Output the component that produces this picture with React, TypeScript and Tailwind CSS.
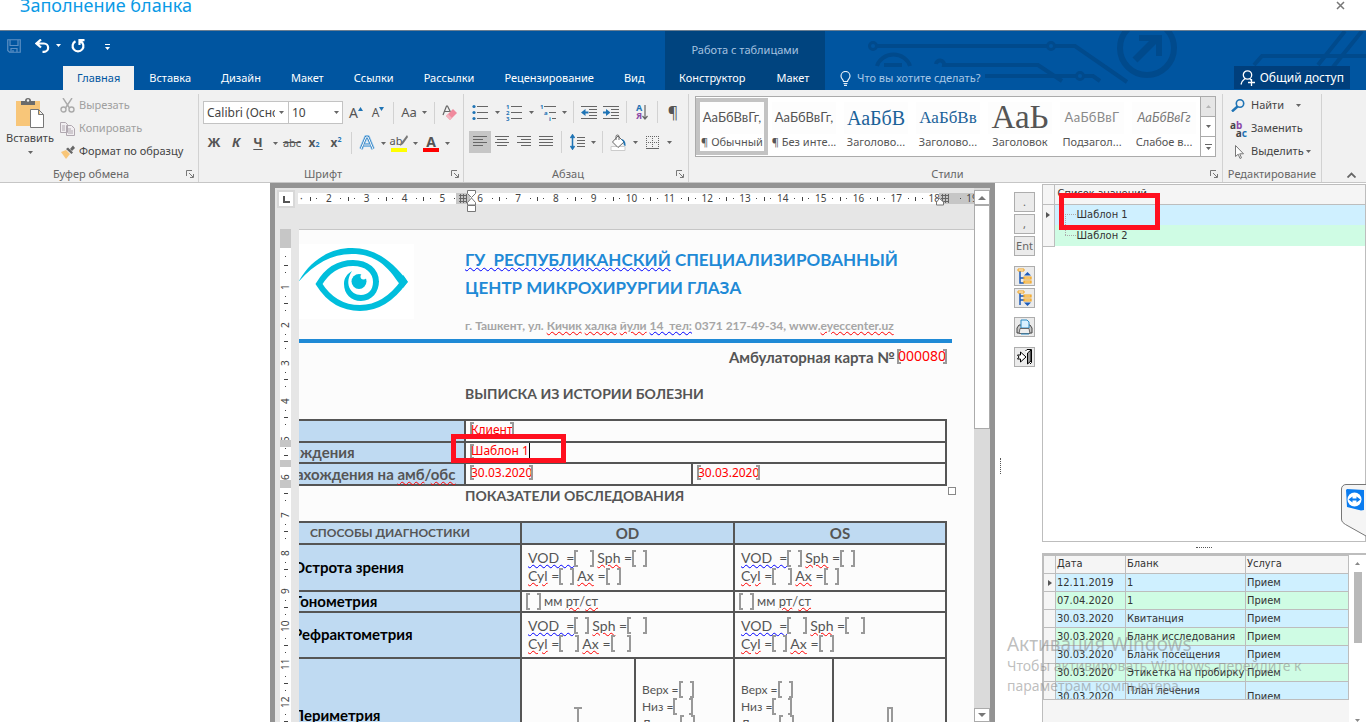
import React from "react";

type Kids = { children?: React.ReactNode };

const Chev = ({ className = "w-3" }: { className?: string }) => (
  <span className={`flex items-center justify-center ${className}`}>
    <svg width="5" height="3" viewBox="0 0 5 3"><path d="M0 0h5L2.500 3z" fill="#666" /></svg>
  </span>
);

const Sep = () => <span className="mx-1 h-[22px] w-px bg-[#d2d2d2]" />;

const Tool = ({ label, children, className = "" }: Kids & { label: string; className?: string }) => (
  <button aria-label={label} className={`flex h-[22px] w-[22px] shrink-0 items-center justify-center text-[#555] ${className}`}>
    {children}
  </button>
);

const Launcher = () => (
  <svg width="8" height="8" viewBox="0 0 8 8" fill="none" stroke="#777">
    <path d="M.5 6V.5H6M3 3l4 4M7.500 4v3.500H4" />
  </svg>
);

const Group = ({ title, children, className = "", launcher = true }: Kids & { title: string; className?: string; launcher?: boolean }) => (
  <section className={`relative flex shrink-0 flex-col border-r border-[#d2d2d2] ${className}`}>
    <div className="flex-1">{children}</div>
    <div className={`h-4 text-center text-[11px] leading-4 text-[#666] ${launcher ? "pr-4" : ""}`}>{title}</div>
    {launcher && <button aria-label={title} className="absolute right-1 bottom-1"><Launcher /></button>}
  </section>
);

const Lines = ({ w }: { w: [number, number][] }) => (
  <svg width="16" height="12" viewBox="0 0 16 12" stroke="#666">
    {w.map(([a, b], i) => <path key={i} d={`M${a} ${i * 3 + 0.5}H${b}`} />)}
  </svg>
);

const leftTabs = ["Вставка", "Дизайн", "Макет", "Ссылки", "Рассылки", "Рецензирование", "Вид"];

function Header() {
  return (
    <header className="flex border-t border-[#6b7f92] bg-[#0055a0] text-[11px] text-white">
      <div className="flex w-[665px] shrink-0 flex-col">
        <div className="flex h-[35px] items-center pb-1.5 pl-[7px]">
          <button aria-label="Сохранить">
            <svg width="14" height="14" viewBox="0 0 14 14" fill="none" stroke="#5c90c4" strokeWidth="1.200">
              <path d="M.75.75h12.500v12.500H2.500L.75 11.500zM3 1v5.500h8V1M4 13V9.500h6V13M6 11v2" />
            </svg>
          </button>
          <button aria-label="Отменить" className="ml-[14px] flex items-center gap-1.5">
            <svg width="15" height="14" viewBox="0 0 15 14" fill="none" stroke="#fff" strokeWidth="2.200">
              <path d="M6 .5 1.500 4.500 6 8.500M2 4.500h7a4 4 0 0 1 0 8.300H7.500" />
            </svg>
            <svg width="5" height="3" viewBox="0 0 5 3"><path d="M0 0h5L2.500 3z" fill="#fff" /></svg>
          </button>
          <button aria-label="Повторить" className="ml-2.5">
            <svg width="14" height="14" viewBox="0 0 14 14" fill="none" stroke="#fff" strokeWidth="2.200">
              <path d="M4.500 2.200A5.400 5.400 0 1 0 9.500 2.200M8.500 6V1.200H13.500" />
            </svg>
          </button>
          <button aria-label="Настройка панели" className="mt-1 ml-5">
            <svg width="5" height="7" viewBox="0 0 5 7" fill="#fff"><path d="M0 0h5v1H0zM0 3h5L2.500 6z" /></svg>
          </button>
        </div>
        <nav className="flex h-6 pl-[63px]">
          <button className="bg-[#f1f1f1] px-[14px] text-[#0055a0]">Главная</button>
          {leftTabs.map((t) => <button key={t} className="px-[15px]">{t}</button>)}
        </nav>
      </div>
      <div className="flex w-[160px] shrink-0 flex-col bg-[#00447f]">
        <div className="h-[35px] pt-1 text-center leading-[30px] text-[#a6c3e0]">Работа с таблицами</div>
        <nav className="flex h-6">
          <button className="px-[14px]">Конструктор</button>
          <button className="px-[17px]">Макет</button>
        </nav>
      </div>
      <div className="relative flex flex-1 items-end overflow-hidden">
        <svg className="absolute top-0 right-0" width="506" height="59" viewBox="860 31 506 59" fill="none" stroke="#004a8c" strokeWidth="4">
          <circle cx="873" cy="46" r="3.500" strokeWidth="3" />
          <path d="M877 46h170M1055 46h20l52 36" />
          <circle cx="1051" cy="46" r="3.500" strokeWidth="3" />
          <path d="M877 66a17 15 0 0 1 33 0M884 65h18" />
          <path d="M936 64a4 4 0 0 1 8 1h94l24 16M985 76h91M1084 76h9l7 5" />
          <circle cx="1080" cy="76" r="3.500" strokeWidth="3" />
          <circle cx="1147" cy="48" r="27" strokeWidth="6" />
          <path d="m1135 60 22-22" strokeWidth="7" />
          <path d="M1139 38h20v18" strokeWidth="6" />
          <path d="m1254 65 8-9h104M1318 65l27-34M1333 67l29-36" />
        </svg>
        <label className="relative flex h-6 flex-1 items-center gap-1.5 pl-[15px]">
          <svg width="11" height="15" viewBox="0 0 11 15" fill="none" stroke="#e5eef7" strokeWidth="1.200">
            <path d="M3.500 10.500c0-2-2.500-2.500-2.500-5.500a4.500 4.500 0 0 1 9 0c0 3-2.500 3.500-2.500 5.500zM3.500 12.500h4M4 14.300h3" />
          </svg>
          <input aria-label="Что вы хотите сделать?" placeholder="Что вы хотите сделать?" className="w-[160px] outline-none placeholder:text-[#a9c8e6]" />
        </label>
        <button className="relative mr-4 mb-px flex h-[23px] items-center gap-1 bg-[#003f7c] px-1.5 text-[12px]">
          <svg width="16" height="16" viewBox="0 0 16 16" fill="none" stroke="#fff" strokeWidth="1.300">
            <circle cx="7.500" cy="5" r="4.200" /><path d="M5 8.500C3 10 1.500 12 1 14.500M10 9l1 1M8 12.500h7M11.500 9v7" />
          </svg>
          Общий доступ
        </button>
      </div>
    </header>
  );
}

function Clipboard() {
  return (
    <Group title="Буфер обмена" className="w-[199px]">
      <div className="flex">
        <button className="flex w-[60px] flex-col items-center pt-1 text-[11px] leading-4 text-[#444]">
          <svg width="30" height="30" viewBox="0 0 30 30">
            <path fill="#f8c679" d="M1 3h24v25H1z" />
            <path fill="#6b6b6b" d="M6 3h4a3 3 0 0 1 6 0h4v4H6z" /><circle cx="13" cy="2.500" r="1.200" fill="#f1f1f1" />
            <path fill="#fff" stroke="#777" d="M15.500 11.500h8l5 5v13h-13zM23.500 11.500v5h5" />
          </svg>
          <span className="mt-0.5">Вставить</span>
          <Chev className="h-3 w-full" />
        </button>
        <div className="flex flex-col text-[11px] text-[#444]">
          <button className="flex h-[23px] items-center gap-1 text-[#a0a0a0]">
            <svg width="15" height="15" viewBox="0 0 15 15" fill="none" stroke="#aaa" strokeWidth="1.400">
              <path d="m3 0 6.500 10M12 0 5.500 10" /><circle cx="3.500" cy="11.500" r="2.500" /><circle cx="11.500" cy="11.500" r="2.500" />
            </svg>
            Вырезать
          </button>
          <button className="flex h-[23px] items-center gap-1 text-[#a0a0a0]">
            <svg width="15" height="14" viewBox="0 0 15 14" fill="#f1eef1" stroke="#b0a8b0">
              <path d="M.5.5h5l2 2v8h-7zM6.500 3.500h5l3 3v7h-8zM2 4h3M2 6h3M2 8h3M8 7h3M8 9h5M8 11h5" />
            </svg>
            Копировать
          </button>
          <button className="flex h-[23px] items-center gap-1">
            <svg width="15" height="14" viewBox="0 0 15 14">
              <path d="m1 7 5-2 4 4-4 5z" fill="#f8c679" /><path d="m6 4 2-1.500 5 5L11.500 9z" fill="#666" /><path d="m10 4 3-3.500L15 3l-3 3z" fill="#666" />
            </svg>
            Формат по образцу
          </button>
        </div>
      </div>
    </Group>
  );
}

function FontGroup() {
  return (
    <Group title="Шрифт" className="w-[265px]">
      <div className="flex items-center pt-[7px] pl-1">
        <button className="flex h-[23px] w-[86px] items-center border border-[#c3c3c3] bg-white pl-[3px] text-[12px] text-[#444]">
          <span className="w-[68px] overflow-hidden text-left whitespace-nowrap">Calibri (Осно</span><Chev className="flex-1" />
        </button>
        <button className="-ml-px flex h-[23px] w-[55px] items-center border border-[#c3c3c3] bg-white pl-[3px] text-[12px] text-[#444]">
          <span className="flex-1 text-left">10</span><Chev />
        </button>
        <Tool label="Увеличить размер" className="ml-0.5 text-[14px]">A<svg className="mb-2" width="5" height="4" viewBox="0 0 5 4"><path d="M0 4h5L2.500 0z" fill="#1f74b5" /></svg></Tool>
        <Tool label="Уменьшить размер" className="text-[12px]">A<svg className="mb-2" width="5" height="4" viewBox="0 0 5 4"><path d="M0 0h5L2.500 4z" fill="#1f74b5" /></svg></Tool>
        <Sep />
        <Tool label="Регистр" className="text-[13px]">Aa</Tool><Chev className="w-2" />
        <span className="w-0.5" /><Sep />
        <Tool label="Очистить формат">
          <svg width="16" height="16" viewBox="0 0 16 16">
            <path d="M1 10 4.500 1h1L9 8M2.500 6.500h5" fill="none" stroke="#666" strokeWidth="1.200" />
            <path d="m4 11 7-7 4 4-7 7z" fill="#f08a9d" /><path d="m4 11 2-2 4 4-2 2z" fill="#f5b3bf" />
          </svg>
        </Tool>
      </div>
      <div className="flex items-center pt-2 pl-1">
        <Tool label="Полужирный" className="text-[13px] font-bold">Ж</Tool>
        <Tool label="Курсив" className="text-[13px] font-bold italic">К</Tool>
        <Tool label="Подчеркнутый" className="text-[13px] font-bold underline underline-offset-2">Ч</Tool>
        <Chev />
        <Tool label="Зачеркнутый" className="text-[11px] line-through">abc</Tool>
        <Tool label="Подстрочный" className="text-[12px] font-bold">x<sub className="text-[7px] text-[#1f74b5]">2</sub></Tool>
        <Tool label="Надстрочный" className="text-[12px] font-bold">x<sup className="text-[7px] text-[#1f74b5]">2</sup></Tool>
        <Sep />
        <Tool label="Эффекты">
          <svg width="16" height="16" viewBox="0 0 16 16" fill="none" strokeLinejoin="round">
            <path d="M2 14 7 2h2l5 12M4.500 10h7" stroke="#9ecbee" strokeWidth="4" /><path d="M2 14 7 2h2l5 12M4.500 10h7" stroke="#2e7fc0" strokeWidth="2.400" /><path d="M2 14 7 2h2l5 12M4.500 10h7" stroke="#fff" strokeWidth="1" />
          </svg>
        </Tool>
        <Chev className="w-2.5" />
        <Tool label="Цвет выделения">
          <span className="flex flex-col items-center">
            <span className="flex h-[13px] items-center text-[11px]">ab
              <svg className="-ml-1" width="10" height="12" viewBox="0 0 10 12"><path d="M9 0 10 2 5 9l-3 2 1-3z" fill="#777" /></svg>
            </span>
            <span className="h-1 w-4 bg-[#ff0]" />
          </span>
        </Tool>
        <Chev className="w-2.5" />
        <Tool label="Цвет текста">
          <span className="flex flex-col items-center"><span className="h-[13px] text-[14px] leading-[13px] font-bold">A</span><span className="h-1 w-4 bg-[#f00]" /></span>
        </Tool>
        <Chev className="w-2.5" />
      </div>
    </Group>
  );
}

const List = ({ kind }: { kind: "dot" | "num" | "multi" }) => (
  <svg width="17" height="17" viewBox="0 0 17 17" fontFamily="Noto Sans" fontSize="6" fontWeight="bold" fill="#1f74b5">
    {kind === "dot" && [2, 8, 14].map((y) => <g key={y}><circle cx="2" cy={y + 0.5} r="1.600" /><path d={`M5 ${y + 0.5}h11`} stroke="#666" /></g>)}
    {kind === "num" && [2, 8, 14].map((y, i) => <g key={y}><text x="0" y={y + 3}>{i + 1}</text><path d={`M5 ${y + 0.5}h11`} stroke="#666" /></g>)}
    {kind === "multi" && (
      <g><text x="0" y="5">1</text><text x="4" y="11">a</text><text x="9" y="17">i</text><path d="M4 2.500h12M9 8.500h7M12 14.500h4" stroke="#666" /></g>
    )}
  </svg>
);

const Indent = ({ right }: { right?: boolean }) => (
  <svg width="16" height="13" viewBox="0 0 16 13">
    <path d="M0 .5h16M8 3.500h8M8 6.500h8M8 9.500h8M0 12.500h16" stroke="#666" />
    <path d={right ? "M0 5.500h3V3l4.500 3.500L3 10V7.500H0z" : "M7.500 5.500h-3V3L0 6.500 4.500 10V7.500h3z"} fill="#1f74b5" />
  </svg>
);

function Paragraph() {
  return (
    <Group title="Абзац" className="w-[225px]">
      <div className="flex items-center pt-[7px] pl-[5px]">
        <Tool label="Маркеры"><List kind="dot" /></Tool><Chev />
        <Tool label="Нумерация"><List kind="num" /></Tool><Chev />
        <Tool label="Многоуровневый список"><List kind="multi" /></Tool><Chev className="w-2.5" />
        <Sep />
        <Tool label="Уменьшить отступ"><Indent /></Tool>
        <Tool label="Увеличить отступ"><Indent right /></Tool>
        <Sep />
        <Tool label="Сортировка">
          <span className="flex flex-col text-[9px] leading-2 font-bold"><span className="text-[#1f74b5]">А</span><span className="text-[#8c4aa8]">Я</span></span>
          <svg width="6" height="15" viewBox="0 0 6 15" fill="none" stroke="#666" strokeWidth="1.200"><path d="M3 0v14M.5 11 3 14l2.500-3" /></svg>
        </Tool>
        <Sep />
        <Tool label="Непечатаемые знаки" className="text-[16px]">¶</Tool>
      </div>
      <div className="flex items-center pt-2 pl-[5px]">
        <Tool label="По левому краю" className="bg-[#c6c6c6]"><Lines w={[[1, 15], [1, 11], [1, 15], [1, 11]]} /></Tool>
        <Tool label="По центру"><Lines w={[[1, 15], [3, 13], [1, 15], [3, 13]]} /></Tool>
        <Tool label="По правому краю"><Lines w={[[1, 15], [5, 15], [1, 15], [5, 15]]} /></Tool>
        <Tool label="По ширине"><Lines w={[[1, 15], [1, 15], [1, 15], [1, 15]]} /></Tool>
        <Sep />
        <Tool label="Интервал">
          <svg width="15" height="16" viewBox="0 0 15 16" fill="none"><path d="M2.500 1v14M.5 4l2-3 2 3M.5 12l2 3 2-3" stroke="#1f74b5" strokeWidth="1.500" /><path d="M7 3.500h8M7 6.500h8M7 9.500h8M7 12.500h8" stroke="#666" /></svg>
        </Tool>
        <Chev className="w-2.5" /><Sep />
        <Tool label="Заливка">
          <svg width="17" height="17" viewBox="0 0 17 17"><path d="M1 12.500h14v4H1z" fill="#fff" stroke="#ccc" /><path d="m8 2 6 6-6 5.500L2.500 8z" fill="#fff" stroke="#666" /><path d="M6 6V2.500a1.500 1.500 0 0 1 3 0V6" fill="none" stroke="#666" /><path d="M11 5c3 0 5 3 4.500 7-2 0-2-3-2-4z" fill="#1f74b5" /></svg>
        </Tool>
        <Chev />
        <Tool label="Границы">
          <svg width="13" height="13" viewBox="0 0 13 13" fill="none" stroke="#666"><path strokeDasharray="1 1" d="M.5 0v12M6.500 0v12M12.500 0v12M0 .5h13M0 6.500h13" /><path d="M0 12.500h13" /></svg>
        </Tool>
        <Chev />
      </div>
    </Group>
  );
}

const styles = [
  { label: "¶ Обычный", text: "АаБбВвГг,", cls: "font-[Lato] text-[13px] text-[#555]" },
  { label: "¶ Без инте...", text: "АаБбВвГг,", cls: "font-[Lato] text-[13px] text-[#555]" },
  { label: "Заголово...", text: "АаБбВ", cls: "font-[Liberation_Serif] text-[20px] text-[#1b6299]" },
  { label: "Заголово...", text: "АаБбВв", cls: "font-[Liberation_Serif] text-[17px] text-[#1b6299]" },
  { label: "Заголовок", text: "АаЬ", cls: "font-[Liberation_Serif] text-[33px] text-[#555]" },
  { label: "Подзагол...", text: "АаБбВвГ", cls: "font-[Lato] text-[13px] tracking-wide text-[#8a8a8a]" },
  { label: "Слабое в...", text: "АаБбВвГг", cls: "font-[Lato] text-[13px] italic text-[#7a7a7a]" },
];

function Styles() {
  return (
    <Group title="Стили" className="w-[534px]">
      <div className="mt-0.5 ml-[6px] flex h-[61px] w-[521px] border border-[#ababab] bg-white">
        <div className="flex flex-1 overflow-hidden">
          {styles.map((s, i) => (
            <button key={i} className={`my-px flex w-[72px] shrink-0 flex-col items-center border-4 ${i === 0 ? "border-[#c3c3c3]" : "border-transparent"}`}>
              <span className={`flex h-8 w-full items-center justify-center overflow-hidden bg-[#fdfdfd] whitespace-nowrap ${s.cls}`}>{s.text}</span>
              <span className="text-[11px] leading-4 whitespace-nowrap text-[#555]">{s.label}</span>
            </button>
          ))}
        </div>
        <div className="flex w-[15px] flex-col border-l border-[#ababab]">
          <button aria-label="Вверх" className="flex flex-1 items-center justify-center bg-[#e6e6e6]"><svg width="5" height="3" viewBox="0 0 5 3"><path d="M0 3h5L2.500 0z" fill="#b5b5b5" /></svg></button>
          <button aria-label="Вниз" className="flex flex-1 items-center justify-center border-y border-[#ababab]"><Chev /></button>
          <button aria-label="Ещё" className="flex flex-1 items-center justify-center"><svg width="7" height="6" viewBox="0 0 7 6" fill="#666"><path d="M0 0h7v1H0zM1 3h5L3.500 6z" /></svg></button>
        </div>
      </div>
    </Group>
  );
}

function Editing() {
  return (
    <Group title="Редактирование" className="w-[99px]" launcher={false}>
      <div className="flex flex-col pl-2 text-[11px] text-[#444]">
        <button className="flex h-[23px] items-center">
          <svg className="mr-1.5" width="14" height="13" viewBox="0 0 14 13" fill="none" stroke="#1f74b5"><circle cx="9" cy="4.500" r="3.700" strokeWidth="1.600" /><path d="M6.500 7.500 1 12.500" strokeWidth="2.400" /></svg>
          Найти<Chev className="ml-2 w-3" />
        </button>
        <button className="flex h-[23px] items-center">
          <span className="mr-1 flex w-4 flex-col text-[10px] leading-[8px] font-bold"><span className="-ml-px text-left">a<span className="text-[#8c4aa8]">b</span></span><span className="text-right">a<span className="text-[#1f74b5]">c</span></span></span>
          Заменить
        </button>
        <button className="flex h-[23px] items-center">
          <svg className="mr-[7px] ml-1" width="9" height="14" viewBox="0 0 9 14" fill="#fff" stroke="#777"><path d="M.5.5v11l2.700-2.300L5 13.500l1.500-.7-1.800-4H8.500z" /></svg>
          Выделить<Chev className="w-2.5" />
        </button>
      </div>
    </Group>
  );
}

function TopRuler() {
  const nums = Array.from({ length: 18 }, (_, i) => i + 2);
  return (
    <div className="relative flex h-[41px] items-start overflow-hidden">
      <div className="mt-[2px] ml-[2px] flex h-[18px] w-[18px] items-center justify-center border-2 border-[#d8d8d8] bg-white">
        <svg width="7" height="7" viewBox="0 0 7 7"><path d="M1 0v6h6" fill="none" stroke="#555" strokeWidth="2" /></svg>
      </div>
      <div className="mt-[5px] ml-[3px] flex h-[11px] flex-1 overflow-hidden bg-white text-[10px] leading-[11px] text-[#444]">
        <span className="w-3 shrink-0 pl-0.5">·</span>
        <div className="flex w-[681px] shrink-0">
          {nums.map((n) => (
            <span key={n} className={`flex flex-1 items-center justify-between ${n === 19 ? "bg-[#c6c6c6]" : ""}`}>
              <i className="h-1 w-px bg-[#444]" /><i className="h-px w-px bg-[#444]" /><span className="w-3 text-center whitespace-nowrap">{n}</span><i className="h-px w-px bg-[#444]" /><i className="w-px" />
            </span>
          ))}
        </div>
      </div>
      <svg className="absolute top-0 left-[181px]" width="26" height="26" viewBox="0 0 26 26">
        <path fill="#c6c6c6" d="M0 5h14v11H0z" /><path d="M3 7.500h8M3 10.500h8M3 13.500h8M4.500 6v9M7.500 6v9M10.500 6v9" stroke="#666" />
        <path d="M11.500 2.500h8v3l-4 4-4-4zM11.500 17v-2.500l4-4.500 4 4.500V17zM11.500 17.500h8v6h-8z" fill="#fff" stroke="#777" />
      </svg>
      <svg className="absolute top-0 left-[658px]" width="24" height="20" viewBox="0 0 24 20">
        <path fill="#c6c6c6" d="M6 5h18v11H6z" /><path d="M8 7.500h8M8 10.500h8M8 13.500h8M9.500 6v9M12.500 6v9M15.500 6v9" stroke="#666" />
        <path d="M3.500 17v-3l3-3.500 4 3.500v3z" fill="#fff" stroke="#777" />
      </svg>
    </div>
  );
}

function SideRuler() {
  return (
    <div className="relative ml-[5px] flex w-[11px] shrink-0 flex-col overflow-hidden bg-white text-[10px] leading-[11px] text-[#444]">
      <div className="h-[19px] shrink-0 bg-[#c6c6c6]" />
      <div className="flex h-[17px] shrink-0 items-center justify-center"><i className="h-px w-px bg-[#444]" /></div>
      {Array.from({ length: 13 }, (_, i) => i + 1).map((n) => (
        <div key={n} className="flex h-[38px] shrink-0 flex-col items-center justify-between">
          <i className="h-px w-1 bg-[#444]" /><i className="h-px w-px bg-[#444]" /><span className="flex h-3 rotate-180 items-center [writing-mode:vertical-rl]">{n}</span><i className="h-px w-px bg-[#444]" /><i className="h-px" />
        </div>
      ))}
      <i className="absolute top-[211px] h-[7px] w-full bg-[#c6c6c6]" />
      <i className="absolute top-[231px] h-[7px] w-full bg-[#c6c6c6]" />
      <i className="absolute top-[251px] h-[8px] w-full bg-[#c6c6c6]" />
    </div>
  );
}

const L = ({ h = "h-[17px]" }: { h?: string }) => <i className={`inline-block w-1 shrink-0 border-y-2 border-l-2 border-[#999] align-middle ${h}`} />;
const R = ({ h = "h-[17px]" }: { h?: string }) => <i className={`inline-block w-1 shrink-0 border-y-2 border-r-2 border-[#999] align-middle ${h}`} />;
const Gap = ({ wide }: { wide?: boolean }) => <span className="mr-[3px] inline-flex items-center align-middle"><L /><span className={wide ? "w-3" : "w-[7px]"} /><R /></span>;
const Red = ({ children }: Kids) => <span className="underline decoration-[#f00] decoration-wavy decoration-1 underline-offset-1">{children}</span>;
const Blue = ({ children }: Kids) => <span className="whitespace-pre underline decoration-[#00f] decoration-wavy decoration-1 underline-offset-1">{children}</span>;
const Value = ({ children, className = "text-[12px]" }: Kids & { className?: string }) => (
  <span className="inline-flex items-center font-[Noto_Sans] text-[#f00]"><L h="h-[15px]" /><span className={`-mx-[3px] ${className}`}>{children}</span><R h="h-[15px]" /></span>
);

const Vod = ({ a, b, c, d }: { a?: boolean; b?: boolean; c?: boolean; d?: boolean }) => (
  <td colSpan={2} className="border-2 border-[#555] pl-1.5 text-[14px] leading-[18px]">
    <div className="flex h-[18px] items-center whitespace-pre"><Blue>VOD  =</Blue><Gap wide={a} /><Red>Sph</Red> =<Gap wide={b} /></div>
    <div className="flex h-[18px] items-center whitespace-pre"><Red>Cyl</Red> =<Gap wide={c} /><Red>Ax</Red> =<Gap wide={d} /></div>
  </td>
);

const Mm = () => (
  <td colSpan={2} className="border-2 border-[#555] pl-1">
    <div className="flex items-center text-[13px] leading-4 whitespace-pre"><Gap />мм <Red>рт</Red>/<Red>ст</Red></div>
  </td>
);

const Sides = () => (
  <td className="border-2 border-[#555] pt-[22px] pl-1.5 align-top text-[12px] leading-[17px]">
    {["Верх", "Низ", "Лево", "Право"].map((s) => <div key={s} className="flex h-[17px] items-center">{s} =<Gap wide={s === "Низ"} /></div>)}
  </td>
);

const rowHead = "border-2 border-[#555] bg-[#bfdaf2] pl-px text-left text-[15px] font-bold text-black";

function Page() {
  return (
    <div className="ml-2 min-w-0 flex-1 overflow-hidden border-t border-[#c6c6c6] bg-[#fcfcfc] font-[Lato,Noto_Sans,sans-serif] text-[#555]">
      <div className="flex h-[109px]">
        <div className="mt-[14px] h-[75px] w-[115px] shrink-0 bg-white">
          <svg width="115" height="75" viewBox="0 0 115 75" fill="none" stroke="#00bedc" strokeWidth="6">
            <path d="M-1 38.500C12 15 32 4 53 4c22 0 40 12 56 34-2 2-3 4-5 6l-5-6C86 18 72 10 53 10 32 10 15 20-1 38.500z" fill="#00bedc" stroke="none" />
            <path d="M102 33 105 37.500C92 56 78 64 61 64 44 64 30 56 20 40 29 25 41 19 54 19c14 0 23 8 23 19" />
            <path d="M80 37c0 11-7 20-18 20-10 0-17-7-17-17 0-6 3-10 8-13-8 12-2 24 9 24 7 0 12-5 12-13z" fill="#00bedc" stroke="none" />
            <circle cx="60" cy="37.500" r="7.500" fill="#00bedc" stroke="none" /><circle cx="64.500" cy="32.500" r="3" fill="#fff" stroke="none" />
          </svg>
        </div>
        <div className="ml-[51px] pt-4 font-bold whitespace-nowrap">
          <h1 className="text-[17px] leading-7 whitespace-pre text-[#1f8ad6]"><Blue>ГУ  РЕСПУБЛИКАНСКИЙ</Blue> СПЕЦИАЛИЗИРОВАННЫЙ</h1>
          <h1 className="text-[17px] leading-7 text-[#1f8ad6]">ЦЕНТР МИКРОХИРУРГИИ ГЛАЗА</h1>
          <p className="mt-4 text-[12px] leading-4 whitespace-pre text-[#a6a6a6]">г. Ташкент, ул. <Red>Кичик</Red> <Red>халка</Red> <Red>йули</Red> <Blue>14  тел:</Blue> 0371 217-49-34, www.<Red>eyeccenter.uz</Red></p>
        </div>
      </div>
      <div className="h-1 w-[653px] bg-[#1f8ad6]" />
      <div className="mt-[3px] flex w-[648px] items-center justify-end gap-0.5 text-[15px] leading-5 font-bold">
        Амбулаторная карта № <span className="font-normal"><Value className="text-[14px]">000080</Value></span>
      </div>
      <h2 className="mt-4 ml-[166px] text-[14px] leading-5 font-bold">ВЫПИСКА ИЗ ИСТОРИИ БОЛЕЗНИ</h2>
      <div className="relative mt-[15px] -ml-[9px] w-[657px]">
        <table className="w-full table-fixed border-collapse text-[15px]">
          <colgroup><col className="w-[174px]" /><col className="w-[227px]" /><col /></colgroup>
          <tbody>
            <tr className="h-[22px]"><th className="border-2 border-[#555] bg-[#bfdaf2]" /><td colSpan={2} className="border-2 border-[#555] pl-1 leading-4"><Value>Клиент</Value></td></tr>
            <tr className="h-[21px]"><th className="border-2 border-[#555] bg-[#bfdaf2] pl-2 text-left leading-4">ждения</th><td colSpan={2} className="border-2 border-[#555] pl-1 leading-4"><span className="inline-flex items-center font-[Noto_Sans] text-[12px] text-[#f00]"><L h="h-[15px]" /><span className="-ml-[3px] border-r border-black">Шаблон 1</span></span></td></tr>
            <tr className="h-[22px]"><th className="border-2 border-[#555] bg-[#bfdaf2] pl-1 text-left leading-4 whitespace-nowrap">ахождения на <Red>амб</Red>/<Red>обс</Red></th><td className="border-2 border-[#555] pl-1 leading-4"><Value>30.03.2020</Value></td><td className="border-2 border-[#555] pl-1 leading-4"><Value>30.03.2020</Value></td></tr>
          </tbody>
        </table>
        <i className="absolute -right-[9px] -bottom-[9px] h-2 w-2 border border-[#888] bg-white" />
        <div className="absolute top-[15px] left-[161px] h-[29px] w-[115px] border-[5px] border-[#ff101f]" />
      </div>
      <h2 className="ml-[166px] text-[14px] leading-5 font-bold">ПОКАЗАТЕЛИ ОБСЛЕДОВАНИЯ</h2>
      <table className="mt-[15px] -ml-[9px] w-[657px] table-fixed border-collapse">
        <colgroup><col className="w-[230px]" /><col className="w-[114px]" /><col className="w-[99px]" /><col className="w-[99px]" /><col /></colgroup>
        <thead>
          <tr className="h-[22px] bg-[#bfdaf2] text-[15px] leading-4">
            <th className="border-2 border-[#555] pr-8 text-[12px] whitespace-nowrap">СПОСОБЫ ДИАГНОСТИКИ</th>
            <th colSpan={2} className="border-2 border-[#555]">OD</th><th colSpan={2} className="border-2 border-[#555]">OS</th>
          </tr>
        </thead>
        <tbody>
          <tr className="h-[47px]"><th className={rowHead}>Острота зрения</th><Vod a /><Vod c /></tr>
          <tr className="h-[21px]"><th className={`${rowHead} leading-4`}>Тонометрия</th><Mm /><Mm /></tr>
          <tr className="h-[46px]"><th className={rowHead}>Рефрактометрия</th><Vod b c d /><Vod a b /></tr>
          <tr className="h-[116px]">
            <th className={rowHead}>Периметрия</th>
            <td className="border-2 border-[#555] pt-[48px] text-center align-top leading-4"><i className="inline-block h-6 w-2 border-t-2 border-[#999]"><i className="mx-auto block h-6 w-0.5 bg-[#999]" /></i></td>
            <Sides /><Sides />
            <td className="border-2 border-[#555] pt-[48px] text-center align-top leading-4"><i className="inline-block h-6 w-1.5 border-2 border-[#999]" /></td>
          </tr>
        </tbody>
      </table>
    </div>
  );
}

function WordScroll() {
  return (
    <div className="flex w-4 shrink-0 flex-col bg-[#dadada] pt-0.5">
      <button aria-label="Прокрутить вверх" className="flex h-[15px] items-center justify-center border border-[#ababab] bg-white"><svg width="8" height="4" viewBox="0 0 8 4"><path d="M0 4h8L4 0z" fill="#777" /></svg></button>
      <div className="h-[224px] border border-[#ababab] bg-white" />
      <div className="flex-1" />
      <button aria-label="Прокрутить вниз" className="flex h-[14px] items-center justify-center border border-[#ababab] bg-white"><svg width="8" height="4" viewBox="0 0 8 4"><path d="M0 0h8L4 4z" fill="#777" /></svg></button>
    </div>
  );
}

const Side = ({ label, children, className = "mt-0.5" }: Kids & { label: string; className?: string }) => (
  <button aria-label={label} className={`flex h-5 w-[21px] items-center justify-center border border-[#adadad] bg-[#ebebeb] text-[11px] text-[#666] ${className}`}>{children}</button>
);

const Tree = ({ up }: { up?: boolean }) => (
  <svg className="shrink-0" width="16" height="17" viewBox="0 0 16 17" fill="none">
    <path d={up ? "M3 3v12h4M3 10h4" : "M3 3v12M3 6h4M3 10h4"} stroke="#1d5bb8" strokeWidth="1.500" />
    <path d="M1 1h6v2H1z" fill="#fff" stroke="#f0a21e" />
    <path d={up ? "M7 9h7v2H7zM7 13h7v2H7z" : "M7 5h7v2H7zM7 9h7v2H7z"} fill="#ffe3a6" stroke="#f0a21e" strokeWidth="1.200" />
    <path d={up ? "M7 7.500h7L10.500 4z" : "M7 12.500h7L10.500 16z"} fill="#1d5bb8" />
  </svg>
);

function SideButtons() {
  return (
    <div className="flex w-[47px] shrink-0 pt-[9px]">
      <div className="mt-[266px] ml-[5px] h-4 w-[14px] border-l border-dotted border-[#555]" />
      <div>
        <Side label="Точка" className="">.</Side>
        <Side label="Запятая">,</Side>
        <Side label="Ввод">Ent</Side>
        <Side label="Свернуть" className="mt-2.5"><Tree up /></Side>
        <Side label="Развернуть"><Tree /></Side>
        <Side label="Печать" className="mt-[9px]">
          <svg className="shrink-0" width="17" height="16" viewBox="0 0 17 16"><path d="M3 6 1 9v5h15V9l-2-3z" fill="#c9c9c9" stroke="#444" /><path d="M5 9V1h6l2 2v6z" fill="#d8f0ff" stroke="#2a8ac4" /><path d="M4 9.500h9l1 5H3z" fill="#eee" stroke="#666" /><path d="M5 15h8" stroke="#2a8ac4" /></svg>
        </Side>
        <Side label="Выход" className="mt-2.5">
          <svg className="shrink-0" width="17" height="16" viewBox="0 0 17 16"><path d="M9.500 2 11 .5h4.500v13L14 15" fill="#fff" stroke="#000" /><path d="m11.500 4 3.500-3v11l-3.500 3z" fill="#999" stroke="#000" /><path d="M1.500 6h3V3l5.500 5-5.500 5v-3h-3l1.500-2z" fill="#fff" stroke="#000" /></svg>
        </Side>
      </div>
    </div>
  );
}

const Mark = () => <svg className="mx-auto" width="4" height="6" viewBox="0 0 4 6"><path d="M0 0v6l4-3z" fill="#555" /></svg>;

const records = [
  ["12.11.2019", "1"], ["07.04.2020", "1"], ["30.03.2020", "Квитанция"], ["30.03.2020", "Бланк исследования"],
  ["30.03.2020", "Бланк посещения"], ["30.03.2020", "Этикетка на пробирку"],
];

function RightPanels() {
  return (
    <aside className="relative flex min-w-0 flex-1 flex-col pt-px font-[DejaVu_Sans_Condensed,sans-serif] text-[11px] text-[#333]">
      <div className="relative h-[358px] shrink-0 border border-[#bdbdbd] bg-white">
        <table className="w-full table-fixed border-collapse">
          <colgroup><col className="w-[11px]" /><col /></colgroup>
          <thead><tr className="h-[19px] bg-[#f5f5f5] leading-4"><th className="border-r border-b border-[#bdbdbd]" /><th className="border-b border-[#bdbdbd] pl-[3px] text-left font-normal">Список значений</th></tr></thead>
          <tbody className="leading-4">
            <tr className="h-[21px]"><td className="border-r border-[#bdbdbd] bg-[#f5f5f5]"><Mark /></td><td className="bg-[#cff0ff] pl-[22px]">Шаблон 1</td></tr>
            <tr className="h-[21px]"><td className="border-r border-b border-[#bdbdbd] bg-[#f5f5f5]" /><td className="bg-[#cffce4] pl-[22px]">Шаблон 2</td></tr>
          </tbody>
        </table>
        <svg className="absolute top-[29px] left-[22px]" width="12" height="23" viewBox="0 0 12 23" fill="none" stroke="#aaa" strokeDasharray="1 1"><path d="M0 .5h11M.5 0v21M0 21.500h11" /></svg>
        <div className="absolute top-[8px] left-[16px] h-[37px] w-[101px] border-[5px] border-[#ff101f]" />
      </div>
      <div className="mx-auto mt-[5px] h-px w-4 border-t border-dotted border-[#555]" />
      <div className="mt-[5px] flex min-h-0 flex-1 overflow-hidden border-t-2 border-l border-[#bdbdbd] bg-[#f5f5f5]">
        <div className="min-w-0 flex-1">
          <table className="w-full table-fixed border-collapse [&_td]:border [&_td]:border-[#bdbdbd] [&_th]:border [&_th]:border-[#bdbdbd]">
            <colgroup><col className="w-[12px]" /><col className="w-[70px]" /><col className="w-[120px]" /><col /></colgroup>
            <thead><tr className="h-[18px] text-left"><th /><th className="pl-px font-normal">Дата</th><th className="pl-px font-normal">Бланк</th><th className="pl-px font-normal">Услуга</th></tr></thead>
            <tbody>
              {records.map(([d, f], i) => (
                <tr key={i} className={`h-[18px] leading-4 whitespace-nowrap ${i % 2 ? "bg-[#cffce4]" : "bg-[#cff0ff]"}`}>
                  <td className="bg-[#f5f5f5]">{i === 0 && <Mark />}</td><td className="pl-px">{d}</td><td className="pl-px">{f}</td><td className="pl-px">Прием</td>
                </tr>
              ))}
              <tr className="h-[18px] bg-[#cff0ff]">
                <td className="bg-[#f5f5f5]" /><td className="pl-px"><div className="h-[17px] overflow-hidden pt-[7px] leading-4">30.03.2020</div></td>
                <td className="pl-px"><div className="h-[17px] overflow-hidden leading-[18px]">План лечения</div></td><td className="pl-px"><div className="h-[17px] overflow-hidden pt-[7px] leading-4">Прием</div></td>
              </tr>
            </tbody>
          </table>
        </div>
        <div className="flex w-[17px] shrink-0 flex-col items-center bg-white pt-[7px]">
          <svg width="5" height="3" viewBox="0 0 5 3"><path d="M0 3h5L2.500 0z" fill="#888" /></svg>
          <div className="mt-[7px] h-[71px] w-2 bg-[#b9b9b9]" />
          <div className="flex-1" />
          <svg width="5" height="3" viewBox="0 0 5 3"><path d="M0 0h5L2.500 3z" fill="#888" /></svg>
        </div>
      </div>
      <div className="pointer-events-none absolute bottom-[26px] -left-[35px] font-[Noto_Sans] text-[14px] leading-5 whitespace-nowrap text-[#8888888c]">
        <p className="text-[19px] leading-6">Активация Windows</p>
        <p>Чтобы активировать Windows, перейдите к</p>
        <p>параметрам компьютера.</p>
      </div>
      <svg className="absolute top-[301px] right-0" width="25" height="53" viewBox="0 0 25 53">
        <path d="M25 .5H5A4.500 4.500 0 0 0 .5 5v30c0 3 2 4 4 5.500L25 52" fill="#f5f5f5" stroke="#777" />
        <path d="m5 6 1-1 17 1v20l-3 .5L6 23z" fill="#0a7cf0" /><circle cx="13.500" cy="15.500" r="7" fill="#fff" />
        <path d="m7.500 15.500 4-3v2h4v-2l4 3-4 3v-2h-4v2z" fill="#0a7cf0" />
      </svg>
    </aside>
  );
}

export default function App() {
  return (
    <div className="flex h-screen flex-col overflow-hidden bg-white font-[Noto_Sans,sans-serif]">
      <div className="flex h-[30px] shrink-0 justify-between pl-5">
        <h1 className="-mt-[9px] text-[18px] leading-7 text-[#0a9ae6]">Заполнение бланка</h1>
        <button aria-label="Закрыть" className="mr-[21px] h-2.5"><svg width="9" height="9" viewBox="0 0 9 9"><path d="m1 1 7 7M8 1 1 8" stroke="#777" strokeWidth="1.500" /></svg></button>
      </div>
      <Header />
      <div className="flex h-[93px] shrink-0 border-b border-[#c6c6c6] bg-[#f1f1f1] pt-1">
        <Clipboard /><FontGroup /><Paragraph /><Styles /><Editing />
        <button aria-label="Свернуть ленту" className="mr-2.5 mb-1 ml-auto self-end"><svg width="9" height="6" viewBox="0 0 9 6" fill="none" stroke="#666" strokeWidth="1.800"><path d="m.5 5.500 4-4 4 4" /></svg></button>
      </div>
      <div className="flex min-h-0 flex-1">
        <div className="w-[270px] shrink-0" />
        <main className="flex w-[725px] shrink-0 border-x-[5px] border-t-[5px] border-[#939393] bg-[#e6e6e6]">
          <div className="flex min-w-0 flex-1 flex-col">
            <TopRuler />
            <div className="flex min-h-0 flex-1"><SideRuler /><Page /></div>
          </div>
          <WordScroll />
        </main>
        <SideButtons />
        <RightPanels />
      </div>
    </div>
  );
}
